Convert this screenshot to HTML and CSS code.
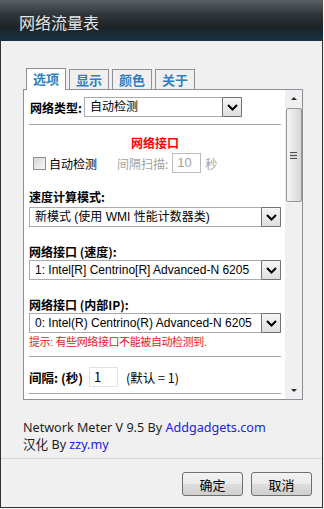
FILE: index.html
```html
<!DOCTYPE html>
<html lang="zh-CN">

<head>
    <meta charset="UTF-8">
    <title>网络流量表</title>
    <link rel="stylesheet" href="styles.css">
</head>

<body>
    <div class="window">
        <div class="titlebar">网络流量表</div>

        <div class="client">
            <div class="tabs">
                <span class="tab active">选项</span>
                <span class="tab">显示</span>
                <span class="tab">颜色</span>
                <span class="tab">关于</span>
            </div>

            <div class="panel">
                <div class="page">
                    <div class="type_row">
                        <span class="bold">网络类型:</span>
                        <div class="combo combo_short">
                            <span class="combo_text">自动检测</span>
                            <span class="combo_btn"><svg width="11" height="7" viewBox="0 0 11 7"><polyline points="1,1 5.5,5.5 10,1" fill="none" stroke="#000" stroke-width="2"/></svg></span>
                        </div>
                    </div>

                    <div class="sep"></div>

                    <p class="heading">网络接口</p>

                    <div class="check_row">
                        <span class="checkbox"></span>
                        <span class="check_label">自动检测</span>
                        <span class="muted scan_label">间隔扫描:</span>
                        <span class="small_input disabled">10</span>
                        <span class="muted">秒</span>
                    </div>

                    <p class="label first_label">速度计算模式:</p>
                    <div class="combo">
                        <span class="combo_text">新模式 (使用 WMI 性能计数器类)</span>
                        <span class="combo_btn"><svg width="11" height="7" viewBox="0 0 11 7"><polyline points="1,1 5.5,5.5 10,1" fill="none" stroke="#000" stroke-width="2"/></svg></span>
                    </div>

                    <p class="label">网络接口 (速度):</p>
                    <div class="combo">
                        <span class="combo_text">1: Intel[R] Centrino[R] Advanced-N 6205</span>
                        <span class="combo_btn"><svg width="11" height="7" viewBox="0 0 11 7"><polyline points="1,1 5.5,5.5 10,1" fill="none" stroke="#000" stroke-width="2"/></svg></span>
                    </div>

                    <p class="label">网络接口 (内部IP):</p>
                    <div class="combo">
                        <span class="combo_text">0: Intel(R) Centrino(R) Advanced-N 6205</span>
                        <span class="combo_btn"><svg width="11" height="7" viewBox="0 0 11 7"><polyline points="1,1 5.5,5.5 10,1" fill="none" stroke="#000" stroke-width="2"/></svg></span>
                    </div>
                    <p class="hint">提示: 有些网络接口不能被自动检测到.</p>

                    <div class="sep sep_hint"></div>

                    <div class="interval_row">
                        <span class="bold">间隔: (秒)</span>
                        <span class="small_input">1</span>
                        <span>(默认 = 1)</span>
                    </div>

                    <div class="sep sep_last"></div>
                </div>

                <div class="scrollbar">
                    <span class="arrow up"></span>
                    <div class="thumb"><span class="grip"></span></div>
                    <span class="arrow down"></span>
                </div>
            </div>

            <div class="credits">
                <p>Network Meter V 9.5 By <span class="link">Addgadgets.com</span></p>
                <p>汉化 By <span class="link">zzy.my</span></p>
            </div>
        </div>

        <div class="footer">
            <button>确定</button>
            <button>取消</button>
        </div>
    </div>
</body>

</html>
```

FILE: styles.css
```css
* {
    margin: 0;
    padding: 0;
    box-sizing: border-box;
}

body {
    width: 324px;
    height: 509px;
    background-color: #f4f4f4;
    font-family: "Liberation Sans", "Noto Sans CJK SC", sans-serif;
    font-size: 12px;
    color: #000;
}

.window {
    width: 323px;
    height: 508px;
    border: 1px solid #2f3336;
    border-top: none;
    background-color: #f0f0f0;
    display: flex;
    flex-direction: column;
}

.titlebar {
    height: 41px;
    margin: 0 -1px;
    padding-left: 19px;
    line-height: 44px;
    font-family: "Noto Sans CJK SC", sans-serif;
    font-size: 16px;
    color: #e4e6e8;
    background: linear-gradient(#5a6064 0, #30363a 35%, #1c2226 65%, #173546 100%);
}

.client {
    padding: 28px 0 0 22px;
    flex: 1;
}

/* 选项卡 */
.tabs {
    display: flex;
    gap: 3px;
    padding-left: 3px;
    height: 20px;
    align-items: flex-end;
}

.tab {
    width: 40px;
    height: 20px;
    border: 1px solid #8d9099;
    border-bottom: none;
    background-color: #f0f0f0;
    text-align: center;
    line-height: 20px;
    font-family: "Noto Sans CJK SC", sans-serif;
    font-size: 13px;
    font-weight: bold;
    color: #2f7fc1;
}

.tab.active {
    height: 22px;
    margin-bottom: -1px;
    background-color: #fff;
    position: relative;
    z-index: 1;
}

.panel {
    width: 280px;
    height: 311px;
    border: 1px solid #8d9099;
    background-color: #fff;
    display: flex;
}

.page {
    width: 261px;
    padding: 7px 4px 0 5px;
    overflow: hidden;
}

.bold {
    font-family: "Noto Sans CJK SC", sans-serif;
    font-weight: bold;
}

.type_row {
    display: flex;
    align-items: center;
    height: 20px;
}

.type_row .bold {
    width: 55px;
    padding-left: 1px;
}

.combo {
    display: flex;
    height: 20px;
    border: 1px solid #a9abb0;
    background-color: #fff;
}

.combo_short {
    width: 158px;
}

.combo_text {
    flex: 1;
    padding-left: 5px;
    line-height: 18px;
    white-space: nowrap;
    overflow: hidden;
    font-size: 12px;
}

.combo_btn {
    width: 20px;
    margin: -1px -1px -1px 0;
    border: 1px solid #70747a;
    border-radius: 1px;
    background: linear-gradient(#f6f6f6, #dedede);
    display: flex;
    align-items: center;
    justify-content: center;
}

.sep {
    margin-top: 7px;
    height: 2px;
    border-top: 1px solid #a6a6a6;
    border-bottom: 1px solid #fff;
}

.heading {
    margin-top: 10px;
    height: 14px;
    line-height: 14px;
    text-align: center;
    font-family: "Noto Sans CJK SC", sans-serif;
    font-weight: bold;
    color: #ff0000;
}

.check_row {
    margin-top: 3px;
    height: 20px;
    display: flex;
    align-items: center;
}

.checkbox {
    width: 13px;
    height: 13px;
    margin-left: 4px;
    border: 1px solid #8e8f8f;
    background: linear-gradient(135deg, #d8d8d8, #f6f6f6);
}

.check_label {
    margin-left: 3px;
    font-family: "Noto Sans CJK SC", sans-serif;
}

.muted {
    color: #a3a3a3;
    font-family: "Noto Sans CJK SC", sans-serif;
}

.scan_label {
    margin-left: 20px;
}

.small_input {
    width: 29px;
    height: 20px;
    margin: 0 4px 0 4px;
    padding-left: 4px;
    border: 1px solid #c9cbd0;
    line-height: 18px;
    font-size: 13px;
    background-color: #fff;
}

.small_input.disabled {
    color: #a3a3a3;
    border-color: #b8bbc0;
}

.label {
    margin-top: 17px;
    height: 16px;
    line-height: 16px;
    font-family: "Noto Sans CJK SC", sans-serif;
    font-weight: bold;
}

.label + .combo {
    margin-top: 0;
}

.first_label {
    margin-top: 16px;
}

.first_label + .combo {
    margin-top: 2px;
}

.hint {
    margin-top: 1px;
    height: 16px;
    line-height: 16px;
    font-family: "Liberation Sans", "Noto Sans CJK SC", sans-serif;
    font-size: 11px;
    letter-spacing: -0.4px;
    color: #e8161c;
}

.sep_hint {
    margin-top: 6px;
}

.interval_row {
    margin-top: 9px;
    height: 20px;
    display: flex;
    align-items: center;
    font-family: "Noto Sans CJK SC", sans-serif;
    font-size: 12.5px;
}

.interval_row .bold {
    width: 59px;
}

.interval_row .small_input {
    margin: 0 8px 0 1px;
    border-color: #dfe1e4;
}

.sep_last {
    margin-top: 6px;
}

/* 滚动条 */
.scrollbar {
    width: 17px;
    background-color: #f0f0f0;
    display: flex;
    flex-direction: column;
    align-items: center;
}

.arrow {
    height: 17px;
    display: flex;
    align-items: center;
    justify-content: center;
}

.arrow::before {
    content: '';
    border-left: 3px solid transparent;
    border-right: 3px solid transparent;
}

.arrow.up::before {
    border-bottom: 3px solid #2a2a2a;
}

.arrow.down {
    margin-top: auto;
}

.arrow.down::before {
    border-top: 3px solid #2a2a2a;
}

.thumb {
    width: 16px;
    height: 94px;
    margin-top: 1px;
    border: 1px solid #979797;
    border-radius: 2px;
    background: linear-gradient(90deg, #f4f4f4, #e6e6e6 50%, #d6d6d6);
    display: flex;
    align-items: center;
    justify-content: center;
}

.grip {
    width: 7px;
    height: 7px;
    background: repeating-linear-gradient(#4f4f4f 0, #4f4f4f 1px, #d8d8d8 1px, #d8d8d8 3px);
}

.credits {
    margin-top: 19px;
    line-height: 17px;
    font-family: "Noto Sans", "Noto Sans CJK SC", sans-serif;
    font-size: 12.6px;
    color: #1e1e1e;
}

.link {
    color: #2020e6;
}

.footer {
    height: 49px;
    border-top: 1px solid #d6d6d6;
    padding: 13px 10px 0 0;
    display: flex;
    justify-content: flex-end;
    gap: 8px;
}

.footer button {
    width: 61px;
    height: 24px;
    border: 1px solid #707070;
    border-radius: 3px;
    background: linear-gradient(#f2f2f2 0, #ebebeb 50%, #dddddd 51%, #cfcfcf 100%);
    font-family: "Noto Sans CJK SC", sans-serif;
    font-size: 13px;
    color: #000;
}
```
